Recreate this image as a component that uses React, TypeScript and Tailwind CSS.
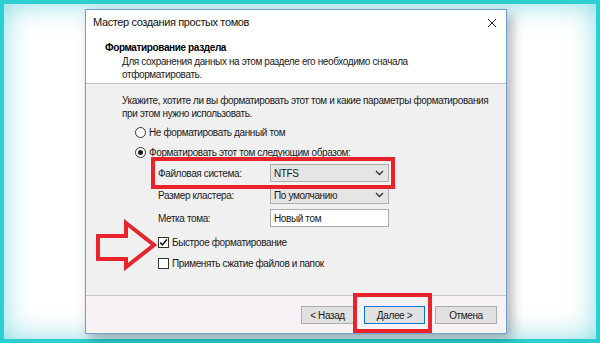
import React from "react";

function Radio({ checked }: { checked?: boolean }) {
  return (
    <span className="flex h-[11px] w-[11px] shrink-0 items-center justify-center rounded-full border border-[#333] bg-white">
      {checked && <span className="h-[5px] w-[5px] rounded-full bg-[#1a1a1a]" />}
    </span>
  );
}

function Check({ checked }: { checked?: boolean }) {
  return (
    <span className="flex h-[11px] w-[11px] shrink-0 items-center justify-center border border-[#333] bg-white">
      {checked && (
        <svg width="9" height="9" viewBox="0 0 9 9">
          <path d="M1.2 4.6 L3.4 6.9 L7.9 1.6" fill="none" stroke="#111" strokeWidth="1.6" />
        </svg>
      )}
    </span>
  );
}

function Chevron() {
  return (
    <svg width="9" height="6" viewBox="0 0 9 6">
      <path d="M1 1 L4.5 4.5 L8 1" fill="none" stroke="#333" strokeWidth="1.4" />
    </svg>
  );
}

function Select({ value }: { value: string }) {
  return (
    <div className="flex h-[18px] w-[119px] items-center justify-between border border-[#adadad] bg-[#e5e5e5] pl-[3px] pr-[4px]">
      <span>{value}</span>
      <Chevron />
    </div>
  );
}

function Button({ label, primary }: { label: string; primary?: boolean }) {
  return (
    <div
      className={
        "flex h-[18px] items-center justify-center bg-[#e1e1e1] " +
        (primary ? "w-[61px] border border-[#0078d7]" : "border border-[#adadad]")
      }
    >
      {label}
    </div>
  );
}

export default function App() {
  return (
    <div className="h-[343px] w-[600px] whitespace-nowrap bg-[#2ccfcf] p-[4px] font-['Liberation_Sans',Arial,sans-serif] text-[10px] tracking-[-0.38px] text-[#1a1a1a]">
      <div className="relative h-full w-full bg-white pl-[81px] pt-[5px] shadow-[inset_0_0_28px_rgba(40,190,205,0.55)]">
        {/* dialog */}
        <div className="flex h-[325px] w-[422px] flex-col border border-[#6c9fd6] bg-white shadow-[5px_5px_12px_rgba(0,0,0,0.3)]">
          <div className="flex h-[25px] shrink-0 items-center justify-between pl-[7px] pr-[9px] text-[11px] text-[#111]">
            <span>Мастер создания простых томов</span>
            <svg width="10" height="10" viewBox="0 0 10 10">
              <path d="M1 1 L9 9 M9 1 L1 9" stroke="#222" strokeWidth="1" />
            </svg>
          </div>

          <div className="h-[49px] shrink-0 border-b border-[#c8c8c8] pl-[19px] pt-[6px] leading-[13px]">
            <div className="font-bold text-black">Форматирование раздела</div>
            <div className="mt-[1px] pl-[17px]">
              <div>Для сохранения данных на этом разделе его необходимо сначала</div>
              <div>отформатировать.</div>
            </div>
          </div>

          <div className="h-[212px] shrink-0 border-b border-[#c8c8c8] bg-[#f0f0f0] pl-[36px] pt-[10px] leading-[13px]">
            <div>Укажите, хотите ли вы форматировать этот том и какие параметры форматирования</div>
            <div>при этом нужно использовать.</div>

            <div className="ml-[13px] mt-[5px] flex h-[14px] items-center gap-[3px]">
              <Radio />
              <span>Не форматировать данный том</span>
            </div>
            <div className="ml-[13px] mt-[6px] flex h-[14px] items-center gap-[3px]">
              <Radio checked />
              <span>Форматировать этот том следующим образом:</span>
            </div>

            <div className="ml-[36px] mt-[5px] flex flex-col gap-[4px]">
              <div className="flex items-center">
                <span className="w-[112px]">Файловая система:</span>
                <Select value="NTFS" />
              </div>
              <div className="flex items-center">
                <span className="w-[112px]">Размер кластера:</span>
                <Select value="По умолчанию" />
              </div>
              <div className="mt-[1px] flex items-center">
                <span className="w-[112px]">Метка тома:</span>
                <div className="flex h-[18px] w-[119px] items-center border border-[#adadad] bg-white pl-[3px]">
                  Новый том
                </div>
              </div>
            </div>

            <div className="ml-[36px] mt-[8px] flex h-[14px] items-center gap-[3px]">
              <Check checked />
              <span>Быстрое форматирование</span>
            </div>
            <div className="ml-[36px] mt-[7px] flex h-[14px] items-center gap-[3px]">
              <Check />
              <span>Применять сжатие файлов и папок</span>
            </div>
          </div>

          <div className="flex flex-1 items-start justify-end gap-[10px] bg-[#f6f2f6] pr-[9px] pt-[10px]">
            <div className="w-[53px]">
              <Button label="< Назад" />
            </div>
            <Button label="Далее >" primary />
            <div className="w-[62px]">
              <Button label="Отмена" />
            </div>
          </div>
        </div>

        {/* annotations */}
        <div className="absolute left-[147px] top-[153px] h-[32px] w-[244px] border-[4px] border-[#e8232b]" />
        <div className="absolute left-[349px] top-[289px] h-[40px] w-[79px] border-[4px] border-[#e8232b]" />
        <svg className="absolute left-[90px] top-[213px]" width="66" height="54" viewBox="0 0 66 54">
          <path
            d="M4 19 L32 19 L32 6 L60 28 L32 50 L32 42 L4 42 Z"
            fill="none"
            stroke="#e8232b"
            strokeWidth="4"
            strokeLinejoin="miter"
          />
        </svg>
      </div>
    </div>
  );
}
